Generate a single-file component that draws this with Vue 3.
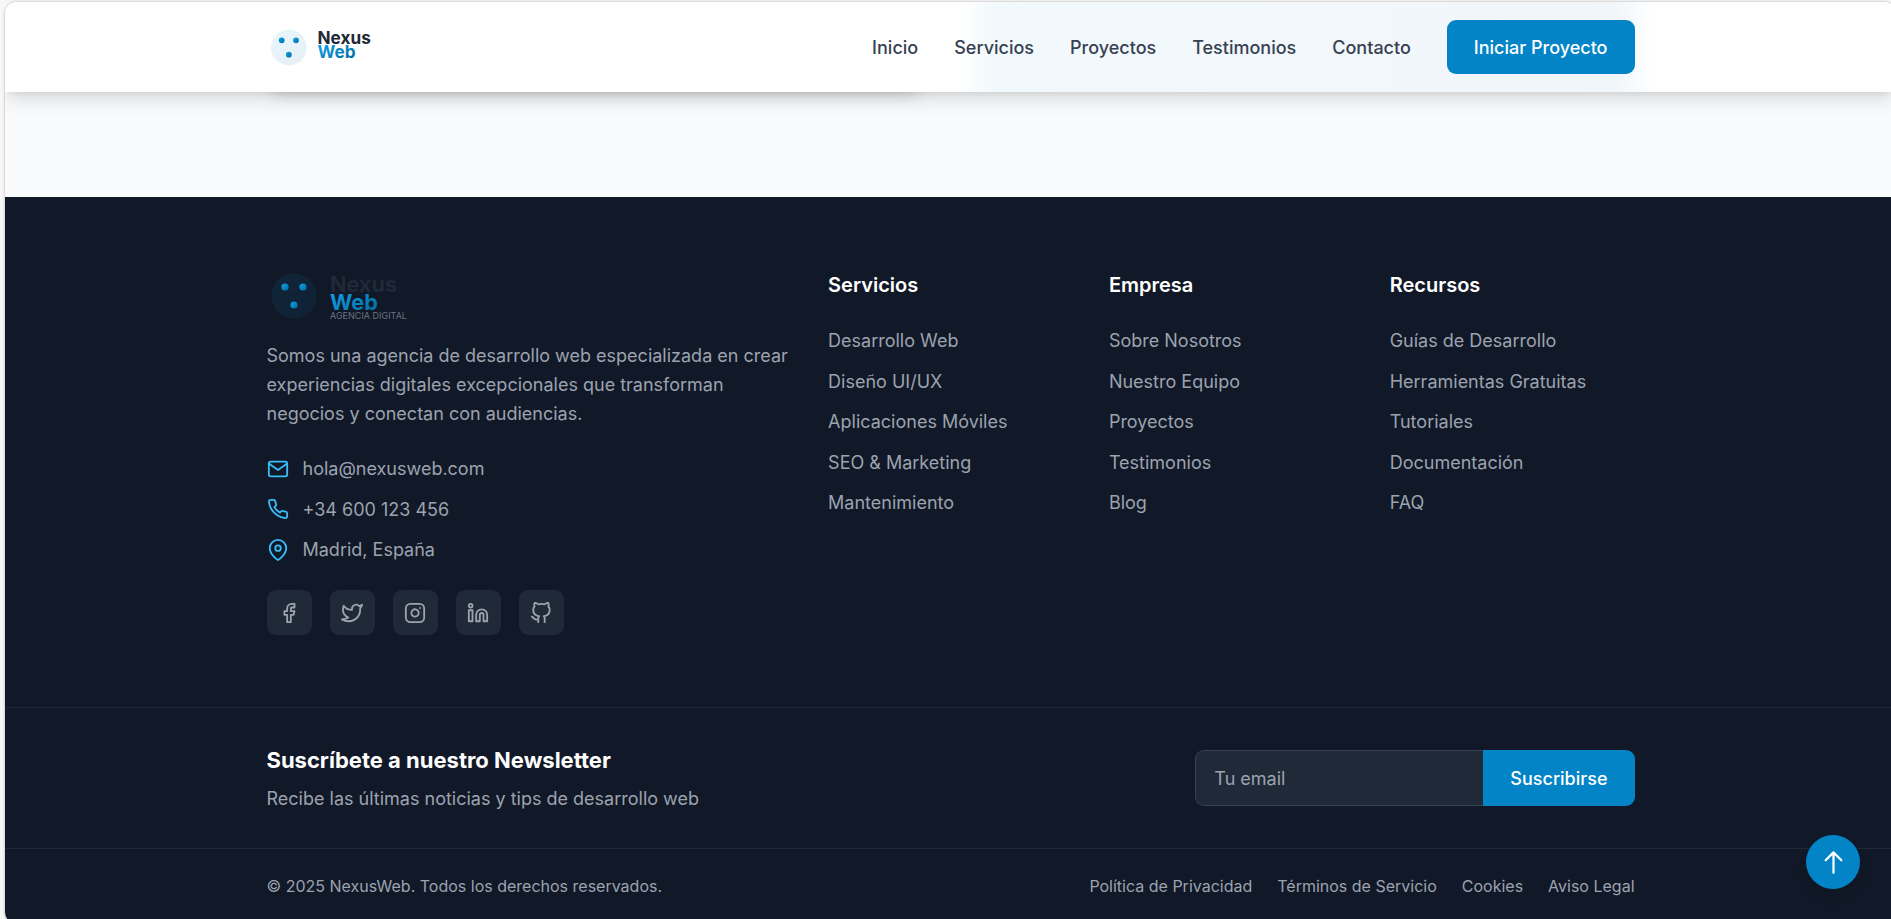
<script setup>
import { ref } from 'vue'

const email = ref('')

const navLinks = ['Inicio', 'Servicios', 'Proyectos', 'Testimonios', 'Contacto']

const columns = [
  {
    title: 'Servicios',
    links: ['Desarrollo Web', 'Diseño UI/UX', 'Aplicaciones Móviles', 'SEO & Marketing', 'Mantenimiento'],
  },
  {
    title: 'Empresa',
    links: ['Sobre Nosotros', 'Nuestro Equipo', 'Proyectos', 'Testimonios', 'Blog'],
  },
  {
    title: 'Recursos',
    links: ['Guías de Desarrollo', 'Herramientas Gratuitas', 'Tutoriales', 'Documentación', 'FAQ'],
  },
]

const contacts = [
  {
    text: 'hola@nexusweb.com',
    href: 'mailto:hola@nexusweb.com',
    paths: [
      'M4 4h16c1.1 0 2 .9 2 2v12c0 1.1-.9 2-2 2H4c-1.1 0-2-.9-2-2V6c0-1.1.9-2 2-2z',
      'M22 6l-10 7L2 6',
    ],
  },
  {
    text: '+34 600 123 456',
    href: 'tel:+34600123456',
    paths: [
      'M22 16.92v3a2 2 0 0 1-2.18 2 19.79 19.79 0 0 1-8.63-3.07 19.5 19.5 0 0 1-6-6 19.79 19.79 0 0 1-3.07-8.67A2 2 0 0 1 4.11 2h3a2 2 0 0 1 2 1.72 12.84 12.84 0 0 0 .7 2.81 2 2 0 0 1-.45 2.11L8.09 9.91a16 16 0 0 0 6 6l1.27-1.27a2 2 0 0 1 2.11-.45 12.84 12.84 0 0 0 2.81.7A2 2 0 0 1 22 16.92z',
    ],
  },
  {
    text: 'Madrid, España',
    href: '#madrid',
    paths: [
      'M21 10c0 7-9 13-9 13s-9-6-9-13a9 9 0 0 1 18 0z',
      'M15 10a3 3 0 1 1-6 0 3 3 0 0 1 6 0z',
    ],
  },
]

const socials = [
  {
    name: 'Facebook',
    paths: ['M18 2h-3a5 5 0 0 0-5 5v3H7v4h3v8h4v-8h3l1-4h-4V7a1 1 0 0 1 1-1h3z'],
  },
  {
    name: 'Twitter',
    paths: [
      'M23 3a10.9 10.9 0 0 1-3.14 1.53 4.48 4.48 0 0 0-7.86 3v1A10.66 10.66 0 0 1 3 4s-4 9 5 13a11.64 11.64 0 0 1-7 2c9 5 20 0 20-11.5a4.5 4.5 0 0 0-.08-.83A7.72 7.72 0 0 0 23 3z',
    ],
  },
  {
    name: 'Instagram',
    paths: [
      'M7 2h10a5 5 0 0 1 5 5v10a5 5 0 0 1-5 5H7a5 5 0 0 1-5-5V7a5 5 0 0 1 5-5z',
      'M16 11.37A4 4 0 1 1 12.63 8 4 4 0 0 1 16 11.37z',
      'M17.5 6.5h.01',
    ],
  },
  {
    name: 'LinkedIn',
    paths: [
      'M16 8a6 6 0 0 1 6 6v7h-4v-7a2 2 0 0 0-4 0v7h-4v-7a6 6 0 0 1 6-6z',
      'M2 9h4v12H2z',
      'M6 4a2 2 0 1 1-4 0 2 2 0 0 1 4 0z',
    ],
  },
  {
    name: 'GitHub',
    paths: [
      'M9 19c-5 1.5-5-2.5-7-3m14 6v-3.87a3.37 3.37 0 0 0-.94-2.61c3.14-.35 6.44-1.54 6.44-7A5.44 5.44 0 0 0 20 4.77 5.07 5.07 0 0 0 19.91 1S18.73.65 16 2.48a13.38 13.38 0 0 0-7 0C6.27.65 5.09 1 5.09 1A5.07 5.07 0 0 0 5 4.77a5.44 5.44 0 0 0-1.5 3.78c0 5.42 3.3 6.61 6.44 7A3.37 3.37 0 0 0 9 18.13V22',
    ],
  },
]

const legalLinks = ['Política de Privacidad', 'Términos de Servicio', 'Cookies', 'Aviso Legal']
</script>

<template>
  <div class="shell">
    <div class="page">
      <header class="header">
        <div class="container header-row">
          <a class="logo" href="#inicio" aria-label="Nexus Web">
            <svg class="logo-small" viewBox="0 0 200 60" aria-hidden="true">
              <defs>
                <linearGradient id="brand-top" x1="0" y1="0" x2="1" y2="1">
                  <stop offset="0" stop-color="#0ea5e9" />
                  <stop offset="1" stop-color="#0369a1" />
                </linearGradient>
              </defs>
              <circle cx="30" cy="30" r="25" fill="url(#brand-top)" opacity="0.1" />
              <circle cx="20" cy="20" r="4" fill="url(#brand-top)" />
              <circle cx="40" cy="20" r="4" fill="url(#brand-top)" />
              <circle cx="30" cy="40" r="4" fill="url(#brand-top)" />
              <text class="logo-word" x="70" y="25" fill="#1f2937">Nexus</text>
              <text class="logo-word" x="70" y="45" fill="url(#brand-top)">Web</text>
            </svg>
          </a>
          <nav class="nav" aria-label="Principal">
            <a v-for="link in navLinks" :key="link" href="#">{{ link }}</a>
            <button class="cta" type="button">Iniciar Proyecto</button>
          </nav>
        </div>
      </header>

      <section class="contact-section">
        <div class="container contact-grid">
          <div class="contact-card"></div>
        </div>
      </section>

      <footer class="footer">
        <div class="container footer-main">
          <div class="brand">
            <svg class="logo-large" viewBox="0 0 200 60" role="img" aria-label="Nexus Web, agencia digital">
              <defs>
                <linearGradient id="brand-bottom" x1="0" y1="0" x2="1" y2="1">
                  <stop offset="0" stop-color="#0ea5e9" />
                  <stop offset="1" stop-color="#0369a1" />
                </linearGradient>
              </defs>
              <circle cx="30" cy="30" r="25" fill="url(#brand-bottom)" opacity="0.1" />
              <circle cx="20" cy="20" r="4" fill="url(#brand-bottom)" />
              <circle cx="40" cy="20" r="4" fill="url(#brand-bottom)" />
              <circle cx="30" cy="40" r="4" fill="url(#brand-bottom)" />
              <text class="logo-word" x="70" y="25" fill="#1f2937">Nexus</text>
              <text class="logo-word" x="70" y="45" fill="url(#brand-bottom)">Web</text>
              <text class="logo-tag" x="70" y="55" fill="#6b7280">AGENCIA DIGITAL</text>
            </svg>
            <p class="about">
              Somos una agencia de desarrollo web especializada en crear experiencias digitales
              excepcionales que transforman negocios y conectan con audiencias.
            </p>
            <ul class="contacts">
              <li v-for="item in contacts" :key="item.text">
                <a class="contact" :href="item.href">
                  <svg class="icon contact-icon" viewBox="0 0 24 24" aria-hidden="true">
                    <path v-for="d in item.paths" :key="d" :d="d" />
                  </svg>
                  {{ item.text }}
                </a>
              </li>
            </ul>
            <div class="socials">
              <a v-for="item in socials" :key="item.name" class="social" href="#" :aria-label="item.name">
                <svg class="icon" viewBox="0 0 24 24" aria-hidden="true">
                  <path v-for="d in item.paths" :key="d" :d="d" />
                </svg>
              </a>
            </div>
          </div>

          <div v-for="column in columns" :key="column.title">
            <h3 class="column-title">{{ column.title }}</h3>
            <ul class="column-links">
              <li v-for="link in column.links" :key="link">
                <a href="#">{{ link }}</a>
              </li>
            </ul>
          </div>
        </div>

        <div class="footer-band">
          <div class="container newsletter">
            <div>
              <h3 class="newsletter-title">Suscríbete a nuestro Newsletter</h3>
              <p>Recibe las últimas noticias y tips de desarrollo web</p>
            </div>
            <form class="newsletter-form" @submit.prevent>
              <input v-model="email" type="email" placeholder="Tu email" aria-label="Tu email" />
              <button type="submit">Suscribirse</button>
            </form>
          </div>
        </div>

        <div class="footer-band">
          <div class="container legal">
            <p>© 2025 NexusWeb. Todos los derechos reservados.</p>
            <nav class="legal-links" aria-label="Legal">
              <a v-for="link in legalLinks" :key="link" href="#">{{ link }}</a>
            </nav>
          </div>
        </div>
      </footer>
    </div>

    <button class="to-top" type="button" aria-label="Volver arriba">
      <svg viewBox="0 0 24 24" aria-hidden="true">
        <path d="M5 10l7-7m0 0l7 7m-7-7v18" />
      </svg>
    </button>
  </div>
</template>

<style>
body {
  margin: 0;
  background: #f7f7f7;
}
</style>

<style scoped>
.shell {
  position: relative;
  box-sizing: border-box;
  height: 100vh;
  overflow: hidden;
  padding: 2px 0 0 5px;
  background: #f7f7f7;
  font-family: Inter, "Liberation Sans", sans-serif;
  font-size: 18px;
  line-height: 27px;
  color: #9ca3af;
}

.shell *,
.shell *::before {
  box-sizing: border-box;
}

.shell::before {
  content: "";
  position: absolute;
  inset: 2px -5px -6px 5px;
  border-radius: 12px;
  box-shadow: 0 0 3px rgba(0, 0, 0, 0.3);
}

.page {
  position: relative;
  width: 100vw;
  border-radius: 12px;
  overflow: hidden;
  background: #f9fafc;
}

.container {
  width: 100%;
  max-width: 1440px;
  margin: 0 auto;
  padding: 0 36px;
}

a {
  color: inherit;
  text-decoration: none;
}

h3,
p,
ul {
  margin: 0;
  padding: 0;
}

ul {
  list-style: none;
}

button,
input {
  font: inherit;
}

button {
  border: 0;
  cursor: pointer;
}

/* Header */
.header {
  position: relative;
  z-index: 1;
  background: linear-gradient(
    90deg,
    #fff calc(50% + 10px),
    #f2f9fc calc(50% + 42px),
    #f1f7fa calc(50% + 400px),
    #f1f6fa calc(50% + 665px),
    #fff calc(50% + 704px)
  );
  box-shadow:
    0 10px 18px -3px rgba(0, 0, 0, 0.13),
    0 4px 8px -4px rgba(0, 0, 0, 0.1);
}

.header-row {
  display: flex;
  align-items: center;
  justify-content: space-between;
  padding-top: 18px;
  padding-bottom: 18px;
}

.logo {
  display: flex;
}

.logo-small {
  width: 144px;
  height: 43px;
}

.logo-large {
  display: block;
  width: 180px;
  height: 54px;
  margin-bottom: 18px;
}

.logo-word {
  font-size: 24px;
  font-weight: 700;
}

.logo-tag {
  font-size: 10px;
}

.nav {
  display: flex;
  align-items: center;
  gap: 36px;
  color: #374151;
  font-weight: 500;
}

.cta {
  padding: 0 27px;
  height: 54px;
  border-radius: 9px;
  background: #0284c7;
  color: #fff;
  font-weight: 500;
}

/* Tail of the contact section, scrolled behind the header */
.contact-section {
  margin-top: -54px;
  padding-bottom: 105px;
}

.contact-grid {
  display: grid;
  grid-template-columns: 1fr 1fr;
  gap: 54px;
}

.contact-card {
  min-height: 54px;
  border-radius: 14px;
  background: #fff;
  box-shadow: 0 8px 16px -5px rgba(0, 0, 0, 0.15);
}

/* Footer */
.footer {
  background: #111827;
}

.footer-main {
  display: grid;
  grid-template-columns: repeat(5, 1fr);
  gap: 36px;
  padding-top: 72px;
  padding-bottom: 72px;
}

.brand {
  grid-column: span 2;
}

.about {
  line-height: 29px;
  margin-bottom: 27px;
}

.contacts {
  display: flex;
  flex-direction: column;
  justify-content: space-between;
  min-height: 108px;
  margin-bottom: 27px;
}

.contact {
  display: flex;
  align-items: center;
  gap: 14px;
}

.icon {
  width: 22px;
  height: 22px;
  fill: none;
  stroke: currentColor;
  stroke-width: 2;
  stroke-linecap: round;
  stroke-linejoin: round;
}

.contact-icon {
  color: #38bdf8;
}

.socials {
  display: flex;
  gap: 18px;
}

.social {
  display: flex;
  align-items: center;
  justify-content: center;
  width: 45px;
  height: 45px;
  border-radius: 9px;
  background: #1f2937;
}

.column-title {
  margin-bottom: 26px;
  color: #fff;
  font-size: 20px;
  font-weight: 600;
  line-height: 32px;
}

.column-links {
  display: flex;
  flex-direction: column;
  justify-content: space-between;
  min-height: 189px;
}

.footer-band {
  border-top: 1px solid #1f2937;
}

.newsletter {
  display: flex;
  align-items: center;
  justify-content: space-between;
  padding-top: 36px;
  padding-bottom: 36px;
}

.newsletter-title {
  margin-bottom: 9px;
  color: #fff;
  font-size: 22px;
  font-weight: 700;
  line-height: 32px;
}

.newsletter-form {
  display: flex;
  height: 56px;
}

.newsletter-form input {
  width: 288px;
  padding: 0 18px;
  border: 1px solid #374151;
  border-right: 0;
  border-radius: 9px 0 0 9px;
  background: #1f2937;
  color: #fff;
  outline: none;
}

.newsletter-form input::placeholder {
  color: #9ca3af;
  opacity: 1;
}

.newsletter-form button {
  padding: 0 27px;
  border-radius: 0 9px 9px 0;
  background: #0284c7;
  color: #fff;
  font-weight: 500;
}

.legal {
  display: flex;
  align-items: center;
  justify-content: space-between;
  padding-top: 26px;
  padding-bottom: 27px;
  font-size: 16px;
  line-height: 22px;
}

.legal-links {
  display: flex;
  gap: 25px;
}

.to-top {
  position: absolute;
  right: 31px;
  bottom: 30px;
  z-index: 2;
  display: flex;
  align-items: center;
  justify-content: center;
  width: 54px;
  height: 54px;
  padding: 0;
  border-radius: 50%;
  background: #0284c7;
  box-shadow: 0 10px 15px -3px rgba(0, 0, 0, 0.1);
}

.to-top svg {
  width: 27px;
  height: 27px;
  fill: none;
  stroke: #fff;
  stroke-width: 2;
  stroke-linecap: round;
  stroke-linejoin: round;
}
</style>
